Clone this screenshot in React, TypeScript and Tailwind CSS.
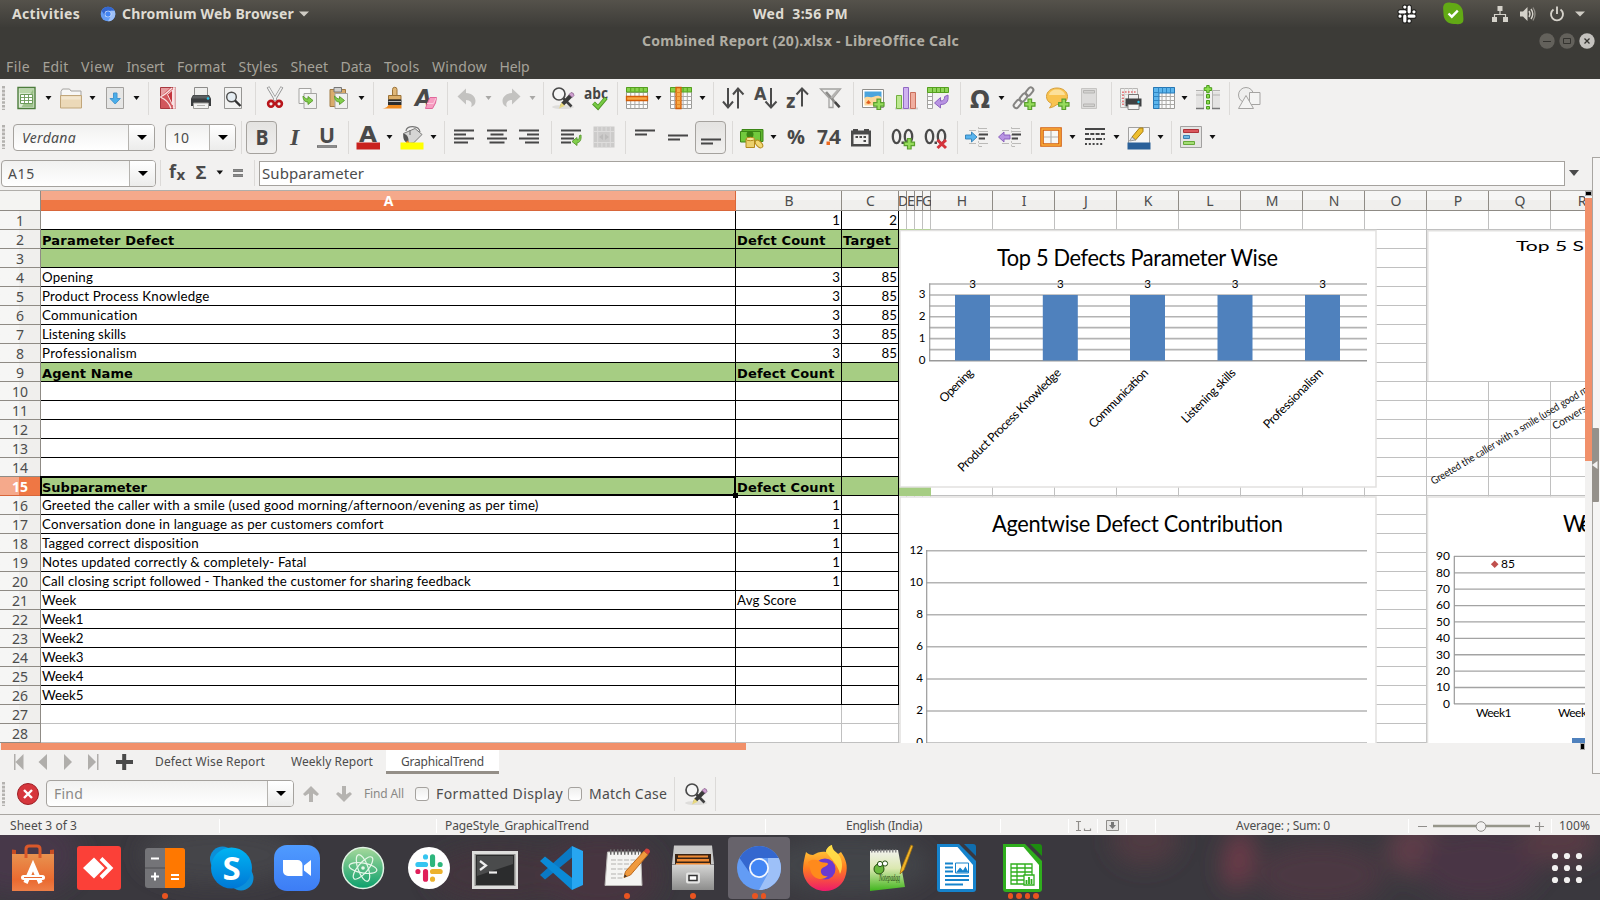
import { useLayoutEffect, useRef } from "react";
import type { ReactNode } from "react";

/* Text that tracks its letters so that it fills exactly w pixels. */
function Fit({ w, children, className = "" }: { w: number; children: string; className?: string }) {
  const ref = useRef<HTMLSpanElement>(null);
  useLayoutEffect(() => {
    const el = ref.current;
    if (!el) return;
    el.style.letterSpacing = "0px";
    const natural = el.getBoundingClientRect().width;
    el.style.letterSpacing = `${(w - natural) / children.length}px`;
  }, [w, children]);
  return (
    <span ref={ref} className={`inline-block whitespace-pre ${className}`}>
      {children}
    </span>
  );
}

function Ic({ children, w = 24, h = 24 }: { children: ReactNode; w?: number; h?: number }) {
  return (
    <svg width={w} height={h} viewBox={`0 0 ${w} ${h}`} className="block shrink-0 overflow-visible">
      {children}
    </svg>
  );
}

const Slot = ({ children }: { children: ReactNode }) => (
  <div className="flex h-full w-[32.5px] shrink-0 items-center justify-center">{children}</div>
);
const Caret = ({ off = false }: { off?: boolean }) => (
  <div className="flex h-full w-[11.5px] shrink-0 items-center justify-center pr-[2px]">
    <Ic w={7} h={4}>
      <path d="M0.5 0h6L3.5 4z" fill={off ? "#a9a8a6" : "#111"} />
    </Ic>
  </div>
);
const Grip = () => (
  <div className="flex w-[11px] shrink-0 items-center pl-[2px]">
    <Ic w={3} h={24}>
      <path d="M1.5 0v24" stroke="#b4b2af" strokeWidth="3" strokeDasharray="2.6 1.2" />
    </Ic>
  </div>
);
function Group({ w, children, first = false }: { w: string; children: ReactNode; first?: boolean }) {
  return (
    <div className={`flex h-[33px] shrink-0 items-center ${w} ${first ? "" : "border-l border-[#dcdad8] pl-[3px]"}`}>
      {children}
    </div>
  );
}

const Plus = ({ x = 12, y = 12 }: { x?: number; y?: number }) => (
  <path
    transform={`translate(${x} ${y})`}
    d="M4 .7h3.6v3.4H11v3.6H7.6V11H4V7.7H.7V4.1H4z"
    fill="#96dc5c"
    stroke="#5a9f2e"
    strokeWidth="1.2"
  />
);

/* ---------- standard toolbar icons ---------- */
const NewSheet = () => (
  <Ic>
    <path d="M3 1.5h17v21H3z" fill="#dcebd4" stroke="#4d7d3c" strokeWidth="1.4" />
    <path d="M4.5 3h14v4h-14z" fill="#b9d6a8" />
    <path d="M18.5 3v18H6.5z" fill="#8bb676" opacity=".75" />
    <path d="M5.5 8.5h12v9h-12z" fill="#fff" stroke="#6b9a58" />
    <path d="M5.5 11.500h12M5.5 14.500h12M9.500 8.500v9M13.500 8.500v9" stroke="#6b9a58" strokeWidth=".9" />
  </Ic>
);
const Folder = () => (
  <Ic>
    <path d="M2 12V5.5L3.500 3h7l1.500 2h10v7" fill="#f7f7f6" stroke="#a5a3a0" />
    <path d="M1.500 9.500h21v12.500h-21z" fill="#ecd9b8" stroke="#c1a67b" />
    <path d="M2.500 10.500h19v3h-19z" fill="#f3e6cf" />
  </Ic>
);
const Save = () => (
  <Ic>
    <path d="M3.5 1.5h17v21h-17z" fill="#e6e6e5" stroke="#a3a19e" />
    <path d="M10.5 7h3.5v5.5h3.3L12.2 18 7 12.5h3.5z" fill="#4aaeea" stroke="#4596cf" />
  </Ic>
);
const Pdf = () => (
  <Ic>
    <path d="M4.500 1.500h15v21h-15z" fill="#d2565c" stroke="#a8383f" />
    <path d="M5 2h9L5 10z" fill="#e79ea1" />
    <path d="M19 2v20h-1.500V2zM16 2C11 7 9 9 5 10.500v1c5 2 8 5 10 11" fill="none" stroke="#f8e3e4" strokeWidth="1.300" />
    <path d="M11.500 8.500L16.500 4v15z" fill="#c4353d" />
    <path d="M11.500 8.500L16.500 4v15z" fill="none" stroke="#f8e3e4" />
  </Ic>
);
const Printer = () => (
  <Ic>
    <path d="M5.5 1.5h13V10h-13z" fill="#eeeeed" stroke="#8d8c8a" />
    <path d="M4 9h16l2 3.500v7.500H2v-7.500z" fill="#3b3d3f" />
    <path d="M4.500 9.500h15l1.500 3H3z" fill="#5b5e60" />
    <path d="M4.5 17h15v5.5h-15z" fill="#f2f2f1" stroke="#9b9a97" />
    <path d="M8 19.5h8" stroke="#b5b4b1" />
    <circle cx="19" cy="12.500" r="1.300" fill="#25c7ee" />
  </Ic>
);
const Preview = () => (
  <Ic>
    <path d="M3.5 1.5h17v21h-17z" fill="#f2f2f1" stroke="#979694" />
    <circle cx="10.5" cy="11" r="4.8" fill="#e5edf2" stroke="#4b4b4b" strokeWidth="1.4" />
    <path d="M14 14.500l5.500 5.500" stroke="#303030" strokeWidth="2.4" />
  </Ic>
);
const Cut = () => (
  <Ic>
    <path d="M5 1l8 13.500M19 1l-8 13.500" stroke="#8c8c8c" strokeWidth="3" />
    <path d="M5.400 1.500l7.400 12.500M18.600 1.500l-7.400 12.500" stroke="#f2f2f2" strokeWidth="1.500" />
    <circle cx="8" cy="17.8" r="2.900" fill="none" stroke="#b8151b" strokeWidth="2.600" />
    <circle cx="16" cy="17.8" r="2.900" fill="none" stroke="#b8151b" strokeWidth="2.600" />
  </Ic>
);
const Arrow = ({ x = 0, y = 0 }: { x?: number; y?: number }) => (
  <path
    transform={`translate(${x} ${y})`}
    d="M0 1c0 4 2 6 5 6V9.5L10 5.5 5 1.5V4C3 4 2 3 0 1z"
    fill="#82cf4c"
    stroke="#58982c"
    strokeWidth=".9"
  />
);
const Copy = () => (
  <Ic>
    <path d="M3 2.5h12v15H3z" fill="#fafafa" stroke="#a5a4a2" />
    <path d="M8 7.5h12.5v15H8z" fill="#f1f1f0" stroke="#a5a4a2" />
    <Arrow x={7} y={9} />
  </Ic>
);
const Paste = () => (
  <Ic>
    <path d="M2 3.5h15.5v17H2z" fill="#d9ac6c" stroke="#a07a45" />
    <path d="M6 1.5h7.5v4.5H6z" fill="#cfcfce" stroke="#777" />
    <path d="M7 7.5h12.5v15H7z" fill="#f1f1f0" stroke="#a5a4a2" />
    <Arrow x={6.5} y={9} />
  </Ic>
);
const Brush = () => (
  <Ic>
    <path d="M11.500 10V3.500a2.200 2.200 0 0 1 4.500 0V10z" fill="#e0b778" stroke="#9c7337" />
    <path d="M7.500 9.500h12.500v4H7.500z" fill="#dcae68" stroke="#9c7337" />
    <path d="M7 13.500h13.500v5.500H7z" fill="#2d2d2d" />
    <path d="M7.500 15.500h12.500" stroke="#bbb" />
    <path d="M1.500 22.500c4-.5 5-2 6-3.500h13v3.500z" fill="#f08a1d" />
  </Ic>
);
const ClearFmt = () => (
  <Ic>
    <text x="1" y="19.5" fontSize="23" textLength="17" lengthAdjust="spacingAndGlyphs" fontStyle="italic" className="font-['DejaVu_Sans'] font-bold" fill="#494949">
      A
    </text>
    <path d="M13 18l3-6.500h6.500l-1 5.500-3 5.500h-7z" fill="#f79cc1" stroke="#e0689b" />
    <path d="M13 17.500h6.500l2.500-5.500" fill="none" stroke="#fbc9dd" />
  </Ic>
);
const Undo = ({ flip = false }: { flip?: boolean }) => (
  <Ic>
    <path
      transform={flip ? "translate(24 0) scale(-1 1)" : undefined}
      d="M2.5 10.5L11 2.5v4.500c6 0 9.500 4 9.500 8 0 3-1.500 5-4.500 6 2-4-.5-7-5-7v4.5z"
      fill="#c3c2c0"
    />
  </Ic>
);
const FindRep = () => (
  <Ic>
    <ellipse cx="12" cy="21" rx="11" ry="2" fill="#dedddb" />
    <circle cx="8" cy="8" r="6" fill="#f6f6f6" stroke="#4a4a4a" strokeWidth="1.7" />
    <path d="M12.5 12.5l8 8" stroke="#404040" strokeWidth="2.600" />
    <path d="M9 20.500l1.5-4L18.500 8l3 3-8.500 8.500z" fill="#3a3a3a" />
    <path d="M18 8.5L20 6.5q3 0 3 3l-1.8 1.9z" fill="#cf9fd0" stroke="#835b86" strokeWidth=".7" />
    <path d="M8 22.5l2.3-6 3.5 3.3z" fill="#e8d87e" />
  </Ic>
);
const Spell = () => (
  <Ic>
    <text x="0" y="13" fontSize="16" textLength="24" lengthAdjust="spacingAndGlyphs" className="font-['Open_Sans'] font-bold" fill="#454545">
      abc
    </text>
    <path d="M9.5 17l4.5 4.5 8-9.5" fill="none" stroke="#4c9224" strokeWidth="4" />
    <path d="M9.7 17.2l4.3 4 7.7-8.900" fill="none" stroke="#77cb44" strokeWidth="2.4" />
  </Ic>
);
const Rows = () => (
  <Ic>
    <path d="M1.5 1.5h21v21h-21z" fill="#fcfcfc" stroke="#9b9a97" />
    <path d="M1.5 6.5h21M1.5 14.5h21M1.5 18.5h21M5.7 1.5v21M9.9 1.5v21M14.1 1.5v21M18.3 1.5v21" stroke="#aaa9a6" />
    <path d="M1.5 1.5h21v4.5h-21z" fill="#86d24c" stroke="#55a01f" />
    <path d="M5.7 1.5v4M9.9 1.5v4M14.1 1.5v4M18.3 1.5v4" stroke="#55a01f" />
    <path d="M1.5 10.5h21v4h-21z" fill="#f8a944" stroke="#d35d08" strokeWidth="1.3" />
  </Ic>
);
const Cols = () => (
  <Ic>
    <path d="M1.5 1.5h21v21h-21z" fill="#fcfcfc" stroke="#9b9a97" />
    <path d="M1.5 10.5h21M1.5 14.5h21M1.5 18.5h21M5.7 1.5v21M14.1 1.5v21M18.3 1.5v21" stroke="#aaa9a6" />
    <path d="M1.5 1.5h21v4.5h-21z" fill="#86d24c" stroke="#55a01f" />
    <path d="M14.1 1.5v4M18.3 1.5v4" stroke="#55a01f" />
    <path d="M7 1.5h5v21H7z" fill="#f8a944" stroke="#d35d08" strokeWidth="1.3" />
    <path d="M7 6.5h5M7 10.5h5M7 14.5h5M7 18.5h5" stroke="#e58622" />
  </Ic>
);
const Sort = () => (
  <Ic>
    <path d="M7 2v19M2 15.5l5 6 5-6" fill="none" stroke="#4b4b4b" strokeWidth="2" />
    <path d="M17 22.5V3M12 8.5l5-6 5.5 6" fill="none" stroke="#4b4b4b" strokeWidth="2" />
  </Ic>
);
const SortA = () => (
  <Ic>
    <text x="0" y="14" fontSize="17" className="font-['DejaVu_Sans'] font-bold" fill="#4b4b4b" textLength="12.500" lengthAdjust="spacingAndGlyphs">
      A
    </text>
    <path d="M17 2v19M11.5 15.5l5.5 6 5.5-6" fill="none" stroke="#4b4b4b" strokeWidth="2" />
  </Ic>
);
const SortZ = () => (
  <Ic>
    <text x="0" y="22" fontSize="20" className="font-['DejaVu_Sans'] font-bold" fill="#4b4b4b" textLength="9.500" lengthAdjust="spacingAndGlyphs">
      z
    </text>
    <path d="M16 20.5V2.5M10.5 8.5l5.5-6 6 6" fill="none" stroke="#4b4b4b" strokeWidth="2" />
  </Ic>
);
const Filter = () => (
  <Ic>
    <path d="M1.5 3h20l-7.500 9v9.5h-4V12z" fill="#efefee" stroke="#a3a2a0" strokeWidth="1.3" />
    <path d="M7 6L20.500 21.500" stroke="#8b8a88" strokeWidth="2.600" />
    <path d="M16 16l4.500 5" stroke="#444" strokeWidth="2.400" />
    <path d="M12 12l8-9" stroke="#b4b3b1" strokeWidth="2" />
  </Ic>
);
const Picture = () => (
  <Ic>
    <path d="M1.5 3.5h21v18h-21z" fill="#fff" stroke="#8f8e8b" />
    <path d="M3.5 5.500h17v7h-17z" fill="#4ba4dd" />
    <path d="M3.5 12c3-2.500 5 0 8-1s5-2.500 9 0v8.500h-17z" fill="#fcd79a" />
    <path d="M5 17l2.500-3 2.500 3-2.500 1z" fill="#e45d1e" />
    <Plus x={12} y={12.5} />
  </Ic>
);
const Chart = () => (
  <Ic>
    <path d="M1 22.5h23" stroke="#cfcdcb" strokeWidth="2" />
    <path d="M2.5 9.5h5v13h-5z" fill="#bde890" stroke="#72b13f" />
    <path d="M9.500 1.5H14.500v21H9.500z" fill="#cfb2f0" stroke="#9168c4" />
    <path d="M16.500 6.5h5v16h-5z" fill="#f0ae9f" stroke="#c9705d" />
  </Ic>
);
const Pivot = () => (
  <Ic>
    <path d="M1.5 1.5h5v21h-5z" fill="#fbfbfb" stroke="#a3a29f" />
    <path d="M1.5 10.5h5M1.5 14.5h5M1.5 18.5h5" stroke="#a3a29f" />
    <path d="M1.5 1.5h21v5h-21z" fill="#8fd458" stroke="#55a01f" />
    <path d="M6.5 1.5v5M10.5 1.5v5M14.5 1.5v5M18.5 1.5v5" stroke="#55a01f" />
    <path d="M8.5 17l6-5.500v3.500c3 0 4-1.500 4.200-4.500l3.300-1.500c.8 7-2 9.500-7.500 9.500v3.500z" fill="#b894e2" stroke="#8559ba" strokeWidth=".9" />
  </Ic>
);
const Omega = () => (
  <Ic>
    <text x="2" y="21.5" fontSize="25" className="font-['DejaVu_Sans'] font-bold" fill="#4a4a4a" textLength="20" lengthAdjust="spacingAndGlyphs">
      Ω
    </text>
  </Ic>
);
const Link = () => (
  <Ic>
    <g fill="none" stroke="#868583" strokeWidth="2">
      <rect x="-4.5" y="-2.6" width="9" height="5.2" rx="2.6" transform="translate(17.5 5.500) rotate(-50)" />
      <rect x="-4.5" y="-2.6" width="9" height="5.2" rx="2.6" transform="translate(11.500 11.5) rotate(-50)" />
      <rect x="-4.5" y="-2.6" width="9" height="5.2" rx="2.6" transform="translate(5.5 18) rotate(-50)" />
    </g>
    <Plus x={12} y={12.5} />
  </Ic>
);
const Comment = () => (
  <Ic>
    <path d="M12 2c6 0 10.5 3.6 10.5 8.5S18 18.500 12 18.500q-3 2.500-7.500 3.500 2-2.500 2-4.500C3 16 1.5 13.5 1.5 10.5 1.5 5.6 6 2 12 2z" fill="#f9c350" stroke="#d6a03c" />
    <path d="M4 9c.8-3.500 4-5.400 8-5.400s7.200 2 8 5.400z" fill="#fce09a" />
    <Plus x={13} y={12.5} />
  </Ic>
);
const Header = () => (
  <Ic>
    <path d="M4.5 2.500h15v20h-15z" fill="#dddcdb" stroke="#c6c5c3" />
    <path d="M6.5 4.500h11v2.500h-11zM6.500 18h11v2.500h-11z" fill="#d2d1cf" stroke="#b6b5b3" />
  </Ic>
);
const PrintArea = () => (
  <Ic>
    <path d="M1.5 2.500h17v19h-17z" fill="#f1f1f0" stroke="#b8b7b5" />
    <path d="M5.5 2.500v18M9.5 2.500v18M13.5 2.500v18M1.5 8.5h17M1.5 12.5h17M1.500 16.500h17" stroke="#d6d5d3" />
    <path d="M4 19V6h13" fill="none" stroke="#e2353b" strokeWidth="1.2" strokeDasharray="1.6 1.4" />
    <path d="M9.5 8.5h10v5h-10z" fill="#eee" stroke="#777" />
    <path d="M6.5 12.500h16v8h-16z" fill="#3e4042" />
    <path d="M9 18.5h11v5H9z" fill="#f4f4f4" stroke="#888" />
    <circle cx="19.5" cy="16" r="1.2" fill="#25c7ee" />
  </Ic>
);
const Freeze = () => (
  <Ic>
    <path d="M1.5 1.5h21v21h-21z" fill="#fcfcfc" stroke="#9b9a97" />
    <path d="M1.5 10.5h21M1.5 14.5h21M1.5 18.5h21M10 1.5v21M14.1 1.5v21M18.3 1.5v21" stroke="#aaa9a6" />
    <path d="M1.5 1.5h21V7H7v15.500H1.5z" fill="#5cb5ec" stroke="#2677b5" />
    <path d="M1.5 6.5H7M6.500 1.5V7M10.500 1.5V7M14.5 1.5V7M18.5 1.5V7M1.5 10.5H7M1.5 14.5H7M1.5 18.5H7" stroke="#2f86c4" />
  </Ic>
);
const Split = () => (
  <Ic>
    <path d="M0 5.500h8v16.500H0zM16 5.500h8v16.500h-8z" fill="#e4e3e2" />
    <path d="M0 4.500h7.5V22M24 4.500h-7.5V22M0 9h7M17 9h7" fill="none" stroke="#b2b1af" />
    <path d="M0 22.5h8M16 22.5h8" stroke="#777" strokeWidth="1.4" />
    <path d="M10.5 8.500h3v3.500h-3zM10.5 14.500h3v3.500h-3zM10.5 20.500h3v2.500h-3z" fill="#8be04e" stroke="#4a9b1c" />
    <path d="M10.700-.5h2.500v2.200h2.500v2.800h-2.500v2.200h-2.500V4.500H8.200V1.700h2.500z" fill="#8be04e" stroke="#4a9b1c" />
  </Ic>
);
const Shapes = () => (
  <Ic>
    <circle cx="9" cy="9" r="7.5" fill="#efefee" stroke="#a5a4a2" />
    <path d="M12.5 6.500h10.5v12H12.5z" fill="#f4f4f3" stroke="#a5a4a2" />
    <path d="M9 9.5l7.500 13h-15z" fill="#f4f4f3" stroke="#a5a4a2" />
  </Ic>
);

/* ---------- formatting toolbar icons ---------- */
const Lines = ({ d }: { d: string }) => (
  <Ic>
    <path d={d} stroke="#474747" strokeWidth="2" />
  </Ic>
);
const Wrap = () => (
  <Ic>
    <path d="M2 5.5h20M2 9.5h13M2 13.5h13M2 17.5h10" stroke="#474747" strokeWidth="2" />
    <path d="M22 10c.5 5-1 7.500-4 7.800V20.500L13 16.500l5-4V15c2-.3 2.500-2 2.500-4.500z" fill="#82cf4c" stroke="#58982c" strokeWidth=".9" />
  </Ic>
);
const Merge = () => (
  <Ic>
    <path d="M1.5 1.5h21v21h-21z" fill="#cccbca" />
    <path d="M1.5 6.5h21M1.5 17.5h21M5.7 1.5v5M9.9 1.5v5M14.1 1.5v5M18.3 1.5v5M5.7 6.5v16M18.3 6.5v16M9.900 17v5.500M14.100 17v5.500" stroke="#dedddc" />
    <path d="M11 9v6L7 12zM13 9v6l4-3z" fill="#bdbcbb" />
  </Ic>
);
const Money = () => (
  <Ic>
    <path d="M2 4.500h21v12H2z" fill="#5fb52f" stroke="#3c8616" />
    <path d="M.5 6.500h20v10.500H.5z" fill="#72ca3d" stroke="#3c8616" />
    <circle cx="10" cy="9.500" r="3.500" fill="#3a8514" />
    <path d="M6 14h8.500v8.500H6z" fill="#ecd06c" stroke="#b4891c" />
    <ellipse cx="10.300" cy="14" rx="4.300" ry="1.700" fill="#f9e79c" stroke="#b4891c" />
    <ellipse cx="19" cy="19" rx="2.600" ry="4.600" transform="rotate(-45 19 19)" fill="#f2d873" stroke="#b4891c" />
  </Ic>
);
const TextIc = ({ t, size, len, y = 20 }: { t: string; size: number; len: number; y?: number }) => (
  <Ic>
    <text x={(24 - len) / 2} y={y} fontSize={size} textLength={len} lengthAdjust="spacingAndGlyphs" className="font-['Open_Sans'] font-bold" fill="#484848">
      {t}
    </text>
  </Ic>
);
const Number74 = () => (
  <Ic>
    <g className="font-['Open_Sans'] font-bold" fontSize="20" fill="#484848">
      <text x="0" y="19" textLength="11" lengthAdjust="spacingAndGlyphs">7</text>
      <text x="12" y="19" textLength="12" lengthAdjust="spacingAndGlyphs">4</text>
    </g>
    <path d="M9.500 16.500h3.500v3.500H9.500z" fill="#ee6a1e" />
  </Ic>
);
const DateIc = () => (
  <Ic>
    <path d="M2 5.500h2V4h5v1.500h6V4h5v1.500h2V21.500H2z" fill="#4a4a4a" />
    <path d="M4.500 9.500h15v9.500h-15z" fill="#f2f1f0" />
    <path d="M10.5 12h2.500M14.5 12H17M6.5 12h2.500M14.5 16H17" stroke="#4a4a4a" strokeWidth="2" />
  </Ic>
);
const Decimal = ({ del = false }: { del?: boolean }) => (
  <Ic>
    <g fill="none" stroke="#4a4a4a" strokeWidth="2.300">
      <ellipse cx="5.500" cy="11.500" rx="3.700" ry="6.700" />
      <ellipse cx="17.500" cy="11.500" rx="3.700" ry="6.700" />
    </g>
    <path d="M10.500 16.500h2.500v2.500h-2.500z" fill="#4a4a4a" />
    {del ? (
      <path d="M13.5 15l8.500 8M22 15l-8.500 8" stroke="#d4333b" strokeWidth="3" />
    ) : (
      <Plus x={12.5} y={13} />
    )}
  </Ic>
);
const Indent = ({ out = false }: { out?: boolean }) => (
  <Ic>
    <path d="M4 5.500h7M4 18.500h7M14 3.500h8M14 6.500h9M14 18.500h9M14 21.500h3" stroke="#bbbab8" />
    <path d="M13.500 2v21" stroke="#c4c3c1" strokeDasharray="2 1.5" />
    <path d="M14 9.500h9M14 13.500h6" stroke="#474747" strokeWidth="2" />
    {out ? (
      <path d="M.5 12l5.500-5v3h6v4H6v3z" fill="#b894e2" stroke="#8559ba" strokeWidth=".9" />
    ) : (
      <path d="M12 12L6.500 7v3h-6v4h6v3z" fill="#58b4ee" stroke="#2f7fb5" strokeWidth=".9" />
    )}
  </Ic>
);
const Borders = () => (
  <Ic>
    <path d="M3 4h18v16H3z" fill="#f7f7f6" stroke="#d35d08" strokeWidth="3.6" />
    <path d="M3 4h18v16H3z" fill="none" stroke="#fbb03f" strokeWidth="1.4" />
    <path d="M12 6v12M5 12h14" stroke="#b3b2b0" strokeWidth="1.2" />
  </Ic>
);
const LineStyle = () => (
  <Ic>
    <path d="M2 4h20" stroke="#474747" strokeWidth="2" />
    <path d="M2 9h20" stroke="#474747" strokeWidth="2" strokeDasharray="4 1.3" />
    <path d="M2 14h20" stroke="#474747" strokeWidth="2" strokeDasharray="6 1.5 2 1.5" />
    <path d="M2 19h19" stroke="#474747" strokeWidth="2" strokeDasharray="2 1.8" />
  </Ic>
);
const BorderColor = () => (
  <Ic>
    <path d="M1.5 2.5h21v17h-21z" fill="#f6f6f6" stroke="#a2a1a0" />
    <path d="M5 12L12.500 3h3.500v3.500L8.500 15z" fill="#eebf2f" stroke="#a77c11" />
    <path d="M2.500 16L5 12l3.500 3z" fill="#ddd" stroke="#888" strokeWidth=".8" />
    <path d="M.5 17.5h23v7H.5z" fill="#2a6099" />
  </Ic>
);
const Cond = () => (
  <Ic>
    <path d="M1.5 1.5h21v21h-21z" fill="#e5e4e3" stroke="#a2a1a0" />
    <path d="M4.5 4.5h15v3h-15z" fill="#d9565b" stroke="#ad3138" />
    <path d="M4.5 10.5h6v3h-6z" fill="#6db8e4" stroke="#3a80b2" />
    <path d="M4.5 16.5h11v3h-11z" fill="#a3dd74" stroke="#66a838" />
  </Ic>
);
const FontColor = () => (
  <Ic>
    <text x="3" y="17" fontSize="22" textLength="18" lengthAdjust="spacingAndGlyphs" className="font-['DejaVu_Sans'] font-bold" fill="#494949">
      A
    </text>
    <path d="M.5 17.500h23.500v7H.5z" fill="#c9211e" />
  </Ic>
);
const Fill = () => (
  <Ic>
    <path d="M3.500 8.500L15 3.500l7 6-8.500 8.500-6 .5z" fill="#d5d5d4" stroke="#7a7a79" />
    <path d="M3.500 8.500c4 1 6 5 4.500 10C4 17 2.500 12.500 3.500 8.500z" fill="#555" />
    <path d="M6 6C6 0 19 0 20 7M10 5v5" fill="none" stroke="#777" strokeWidth="1.200" />
    <path d="M6 18q1-5 3.5 0z" fill="#f28a1f" />
    <path d="M.5 17.500h23v7H.5z" fill="#ffff00" />
  </Ic>
);

function Combo({ box, value, children }: { box: string; value: string; children: ReactNode }) {
  return (
    <div className={`flex h-[27px] shrink-0 overflow-hidden rounded-[4px] border border-[#a5a29e] bg-linear-to-b from-[#f1f1f0] to-white ${box}`}>
      <div className={`flex items-center ${value}`}>{children}</div>
      <div className="flex flex-1 items-center justify-center border-l border-[#b5b3af] bg-linear-to-b from-white to-[#ececeb]">
        <Ic w={10} h={5}>
          <path d="M0 0h10L5 5z" fill="#000" />
        </Ic>
      </div>
    </div>
  );
}
const Pressed = ({ children }: { children: ReactNode }) => (
  <div className="ml-px flex h-[33px] w-[31px] shrink-0 items-center justify-center rounded-[4px] border border-[#a5a29e] bg-linear-to-b from-[#e4e3e1] to-[#f1f0ef]">
    {children}
  </div>
);

/* ---------- window chrome ---------- */
const SlackMark = ({ c }: { c: string[] }) => (
  <g strokeWidth="4.4" strokeLinecap="round">
    <path d="M9 2.5v0M2.5 9h6.5" stroke={c[0]} />
    <path d="M15 2.5v6.5M21.5 9v0" stroke={c[1]} />
    <path d="M15 15h6.5M15 21.5v0" stroke={c[2]} />
    <path d="M9 15v6.5M2.5 15v0" stroke={c[3]} />
  </g>
);
const ChromiumMark = () => (
  <>
    <circle cx="24" cy="24" r="22" fill="#639cf5" />
    <path d="M4.5 14A22 22 0 0 1 43.6 14H24L14.5 28.500z" fill="#3467cf" />
    <path d="M43.6 14A22 22 0 0 1 24 46l9-16.500L33 14z" fill="#9dc0f8" />
    <circle cx="24" cy="24" r="10" fill="#f2f6fd" />
    <circle cx="24" cy="24" r="8.2" fill="#4285f4" />
  </>
);

function TopPanel() {
  return (
    <div className="flex h-[27px] items-center bg-linear-to-b from-[#55524b] to-[#3d3c38] text-[14px] font-bold text-[#dfdbd2]">
      <div className="flex w-[740px] items-center pl-[12px]">
        <Fit w={68}>Activities</Fit>
        <svg width="16" height="16" viewBox="0 0 48 48" className="mr-[6px] ml-[20px]">
          <ChromiumMark />
        </svg>
        <Fit w={172}>Chromium Web Browser</Fit>
        <svg width="10" height="6" className="ml-[5px]">
          <path d="M0 .5h10L5 5.5z" fill="#cfccc4" />
        </svg>
      </div>
      <div className="w-[660px] pl-[13px]">
        <Fit w={95}>Wed  3:56 PM</Fit>
      </div>
      <div className="flex w-[200px] items-center">
        <svg width="22" height="22" viewBox="-3 -3 30 30" className="-ml-[4px]">
          <g stroke="#1c1c1a" strokeWidth="7" strokeLinecap="round">
            <path d="M2.5 9H9M15 2.5V9M15 15h6.500M9 15v6.500M9 2.500v0M21.500 9v0M15 21.500v0M2.500 15v0" />
          </g>
          <SlackMark c={["#fff", "#fff", "#fff", "#fff"]} />
        </svg>
        <svg width="22" height="23" viewBox="0 0 22 23" className="ml-[24px]">
          <path d="M3 1.5C6-.5 9 1 11 1c6 0 10 4.500 10 10 0 3 1 6 0 9-2 3-6 2-9 2-6 0-10.500-4-10.500-10C1.500 8 0 4 3 1.500z" fill="#62a915" />
          <path d="M6.5 11.5l3.300 3.200 6-6" fill="none" stroke="#fff" strokeWidth="2.4" />
        </svg>
        <svg width="16" height="16" className="ml-[28px]">
          <path d="M5.5 0h5v5h-5zM0 11h5v5H0zM11 11h5v5h-5z" fill="#d5d2ca" />
          <path d="M8 5v3.5M2.5 11V8.5h11V11" fill="none" stroke="#d5d2ca" strokeWidth="1.2" />
        </svg>
        <svg width="16" height="16" className="ml-[12px]">
          <path d="M0 5.500h3L7.500 1v14L3 10.500H0z" fill="#d5d2ca" />
          <path d="M9 5q2 3 0 6M11 3q3.500 5 0 10" fill="none" stroke="#d5d2ca" strokeWidth="1.4" />
          <path d="M13 1.500q4 6.500 0 13" fill="none" stroke="#908d86" strokeWidth="1.3" />
        </svg>
        <svg width="16" height="16" className="ml-[13px]">
          <path d="M4.5 3.500a6 6 0 1 0 7 0M8 .5V8" fill="none" stroke="#d5d2ca" strokeWidth="1.9" />
        </svg>
        <svg width="10" height="6" className="ml-[10px]">
          <path d="M0 .5h10L5 5.5z" fill="#cfccc4" />
        </svg>
      </div>
    </div>
  );
}

const MENUS: [string, number][] = [
  ["File", 24], ["Edit", 26], ["View", 33], ["Insert", 38], ["Format", 49], ["Styles", 39.5],
  ["Sheet", 37.5], ["Data", 31], ["Tools", 35.5], ["Window", 55], ["Help", 30],
];

function TitleAndMenu() {
  return (
    <div className="bg-[#3c3b37]">
      <div className="flex h-[27px] items-center text-[14px] font-bold text-[#b0ada3]">
        <div className="w-[1539px] pl-[642px]">
          <Fit w={317}>Combined Report (20).xlsx - LibreOffice Calc</Fit>
        </div>
        <div className="flex gap-[4px]">
          <Ic w={16} h={16}>
            <circle cx="8" cy="8" r="7.7" fill="#63615b" />
            <path d="M4 8.5h8" stroke="#34332f" />
          </Ic>
          <Ic w={16} h={16}>
            <circle cx="8" cy="8" r="7.7" fill="#63615b" />
            <path d="M4.5 5.5h7v5h-7z" fill="none" stroke="#34332f" />
          </Ic>
          <Ic w={16} h={16}>
            <circle cx="8" cy="8" r="7.7" fill="#c4c2be" />
            <path d="M5.5 5.5l5 5M10.5 5.5l-5 5" stroke="#34332f" strokeWidth="1.3" />
          </Ic>
        </div>
      </div>
      <div className="flex h-[25px] items-center gap-[12.5px] pl-[6px] text-[14px] text-[#a5a299]">
        {MENUS.map(([t, w]) => (
          <Fit key={t} w={w}>
            {t}
          </Fit>
        ))}
      </div>
    </div>
  );
}

function StandardBar() {
  return (
    <div className="flex h-[38px] items-center">
      <Grip />
      <Group w="w-[137px]" first>
        <Slot><NewSheet /></Slot><Caret /><Slot><Folder /></Slot><Caret /><Slot><Save /></Slot><Caret />
      </Group>
      <Group w="w-[107px]"><Slot><Pdf /></Slot><Slot><Printer /></Slot><Slot><Preview /></Slot></Group>
      <Group w="w-[118px]"><Slot><Cut /></Slot><Slot><Copy /></Slot><Slot><Paste /></Slot><Caret /></Group>
      <Group w="w-[74px]"><Slot><Brush /></Slot><Slot><ClearFmt /></Slot></Group>
      <Group w="w-[96px]"><Slot><Undo /></Slot><Caret off /><Slot><Undo flip /></Slot><Caret off /></Group>
      <Group w="w-[74px]"><Slot><FindRep /></Slot><Slot><Spell /></Slot></Group>
      <Group w="w-[96px]"><Slot><Rows /></Slot><Caret /><Slot><Cols /></Slot><Caret /></Group>
      <Group w="w-[140px]"><Slot><Sort /></Slot><Slot><SortA /></Slot><Slot><SortZ /></Slot><Slot><Filter /></Slot></Group>
      <Group w="w-[107px]"><Slot><Picture /></Slot><Slot><Chart /></Slot><Slot><Pivot /></Slot></Group>
      <Group w="w-[151px]"><Slot><Omega /></Slot><Caret /><Slot><Link /></Slot><Slot><Comment /></Slot><Slot><Header /></Slot></Group>
      <Group w="w-[118px]"><Slot><PrintArea /></Slot><Slot><Freeze /></Slot><Caret /><Slot><Split /></Slot></Group>
      <Group w="w-[60px]"><Slot><Shapes /></Slot></Group>
    </div>
  );
}

function FormatBar() {
  return (
    <div className="flex h-[40px] items-center text-[#4c4c4c]">
      <Grip />
      <Group w="w-[230px]" first>
        <Combo box="ml-[2px] w-[142px]" value="w-[114px] pl-[8px] text-[14px] italic">
          <Fit w={54}>Verdana</Fit>
        </Combo>
        <Combo box="ml-[10px] w-[71px]" value="w-[43px] pl-[7px] text-[14px]">
          <Fit w={16}>10</Fit>
        </Combo>
      </Group>
      <Group w="w-[107px]">
        <Slot>
          <Pressed><TextIc t="B" size={22} len={13} /></Pressed>
        </Slot>
        <Slot>
          <Ic>
            <text x="8" y="20" fontSize="24" className="font-['Liberation_Serif'] font-bold italic" fill="#4a4a4a">I</text>
          </Ic>
        </Slot>
        <Slot>
          <Ic>
            <text x="5" y="17.5" fontSize="21" textLength="16" lengthAdjust="spacingAndGlyphs" className="font-['Open_Sans'] font-bold" fill="#4a4a4a">U</text>
            <path d="M3 21.5h20" stroke="#5a5a5a" strokeWidth="2.4" />
            <path d="M3.500 21.500h19" stroke="#9a9a9a" strokeWidth=".8" />
          </Ic>
        </Slot>
      </Group>
      <Group w="w-[96px]"><Slot><FontColor /></Slot><Caret /><Slot><Fill /></Slot><Caret /></Group>
      <Group w="w-[107px]">
        <Slot><Lines d="M2 5.5h20M2 9.5h12M2 13.5h20M2 17.5h14" /></Slot>
        <Slot><Lines d="M2 5.5h20M5.5 9.5h13M2 13.5h20M4.5 17.5h15" /></Slot>
        <Slot><Lines d="M2 5.5h20M10 9.5h12M2 13.5h20M8 17.5h14" /></Slot>
      </Group>
      <Group w="w-[74px]"><Slot><Wrap /></Slot><Slot><Merge /></Slot></Group>
      <Group w="w-[107px]">
        <Slot><Lines d="M2 5.5h20M2 9.5h12" /></Slot>
        <Slot><Lines d="M2 10.5h20M2 14.5h12" /></Slot>
        <Slot><Pressed><Lines d="M2 14.5h20M2 18.5h12" /></Pressed></Slot>
      </Group>
      <Group w="w-[151px]">
        <Slot><Money /></Slot><Caret /><Slot><TextIc t="%" size={20} len={18} y={19} /></Slot>
        <Slot><Number74 /></Slot><Slot><DateIc /></Slot>
      </Group>
      <Group w="w-[74px]"><Slot><Decimal /></Slot><Slot><Decimal del /></Slot></Group>
      <Group w="w-[74px]"><Slot><Indent /></Slot><Slot><Indent out /></Slot></Group>
      <Group w="w-[140px]">
        <Slot><Borders /></Slot><Caret /><Slot><LineStyle /></Slot><Caret /><Slot><BorderColor /></Slot><Caret />
      </Group>
      <Group w="w-[60px]"><Slot><Cond /></Slot><Caret /></Group>
    </div>
  );
}

function FormulaBar() {
  return (
    <div className="flex h-[33px] items-start pt-[3px] text-[#4c4c4c]">
      <Combo box="ml-[1px] w-[155px]" value="w-[127px] pl-[6px] text-[14px]">
        <Fit w={27}>A15</Fit>
      </Combo>
      <div className="ml-[4px] flex h-[26px] w-[94px] items-center border-l border-[#dcdad8]">
        <Ic w={94} h={26}>
          <text x="8" y="18" fontSize="18" className="font-['Open_Sans'] font-bold" fill="#4a4a4a">f</text>
          <text x="15.500" y="20" fontSize="15" className="font-['Open_Sans'] font-bold" fill="#4a4a4a">x</text>
          <text x="34.500" y="19" fontSize="18" textLength="11" lengthAdjust="spacingAndGlyphs" className="font-['Open_Sans'] font-bold" fill="#4a4a4a">Σ</text>
          <path d="M55.500 10.500h6.500l-3.200 4z" fill="#111" />
          <path d="M72 10.5h10M72 15.5h10" stroke="#555" strokeWidth="2.6" />
          <path d="M72 10.5h10M72 15.5h10" stroke="#999" strokeWidth=".8" />
        </Ic>
      </div>
      <div className="h-[26px] w-[4px] border-l border-[#dcdad8]" />
      <div className="mt-[1px] ml-[1px] flex h-[25px] w-[1306px] items-center border border-[#a5a29e] bg-white pb-[1px] pl-[2px] text-[15px]">
        <Fit w={102}>Subparameter</Fit>
      </div>
      <div className="mt-[10px] ml-[4px]">
        <Ic w={10} h={6}>
          <path d="M0 0h10L5 6z" fill="#4a4a4a" />
        </Ic>
      </div>
    </div>
  );
}

/* ---------- spreadsheet ---------- */
const GRID = "grid grid-cols-[695px_106px_57px_repeat(4,8px)_repeat(11,62px)]";
const GREEN_ROWS = [2, 3, 9, 15];
const A: Record<number, [string, number]> = {
  2: ["Parameter Defect", 132.5], 4: ["Opening", 51], 5: ["Product Process Knowledge", 167.5], 6: ["Communication", 96],
  7: ["Listening skills", 84], 8: ["Professionalism", 95], 9: ["Agent Name", 91], 15: ["Subparameter", 105],
  16: ["Greeted the caller with a smile (used good morning/afternoon/evening as per time)", 496.5],
  17: ["Conversation done in language as per customers comfort", 342], 18: ["Tagged correct disposition", 157],
  19: ["Notes updated correctly & completely- Fatal", 264.5],
  20: ["Call closing script followed - Thanked the customer for sharing feedback", 429],
  21: ["Week", 34.5], 22: ["Week1", 41.5], 23: ["Week2", 41.5], 24: ["Week3", 41.5], 25: ["Week4", 41.5], 26: ["Week5", 41.5],
};
const BL: Record<number, [string, number]> = {
  2: ["Defct Count", 88.5], 9: ["Defect Count", 97.5], 15: ["Defect Count", 97.5], 21: ["Avg Score", 59.5],
};
const BR: Record<number, string> = { 1: "1", 4: "3", 5: "3", 6: "3", 7: "3", 8: "3", 16: "1", 17: "1", 18: "1", 19: "1", 20: "1" };
const CR: Record<number, string> = { 1: "2", 4: "85", 5: "85", 6: "85", 7: "85", 8: "85" };
const ROWS = Array.from({ length: 28 }, (_, i) => i + 1);
const LETTERS = ["H", "I", "J", "K", "L", "M", "N", "O", "P", "Q", "R"];

function Row({ r }: { r: number }) {
  const bold = GREEN_ROWS.includes(r);
  const bordered = r <= 26;
  const line = bordered ? "border-black" : "border-[#c0c0c0]";
  const bg = bold ? "bg-[#a6cd83]" : "bg-white";
  const font = bold
    ? "font-['DejaVu_Sans'] text-[13px] font-bold leading-[21px]"
    : "font-['Lato'] text-[13.3px] leading-[18px]";
  const cell = `h-[19px] overflow-hidden border-r border-b px-[1px] text-black ${line} ${bg} ${font}`;
  const small = r === 2 || r === 15 ? "bg-[#a6cd83]" : r === 1 ? "border-r border-b border-r-[#c0c0c0] border-b-[#a6cd83]" : "border-r border-b border-[#c0c0c0]";
  return (
    <div className="flex">
      <div
        className={
          r === 15
            ? "h-[19px] w-[41px] border-r border-b border-r-[#8f8b85] border-b-[#d8663a] bg-linear-to-r from-[#f5a98b] from-48% to-[#ef7744] to-48% text-center text-[14px] leading-[19px] font-bold text-white"
            : "h-[19px] w-[41px] border-r border-b border-[#8f8b85] bg-linear-to-r from-[#f6f6f5] from-48% to-[#f0efed] to-48% text-center text-[14px] leading-[19px] text-[#4c4c4c]"
        }
      >
        {r}
      </div>
      <div className={GRID}>
        <div className={cell}>{A[r] ? <Fit w={A[r][1]}>{A[r][0]}</Fit> : null}</div>
        <div className={`${cell} ${BR[r] ? "text-right" : ""}`}>{BL[r] ? <Fit w={BL[r][1]}>{BL[r][0]}</Fit> : BR[r]}</div>
        <div className={`${cell} text-right`}>{r === 2 ? <Fit w={48} className="float-left">Target</Fit> : CR[r]}</div>
        {[0, 1, 2, 3].map((i) => (
          <div key={i} className={`h-[19px] ${small}`} />
        ))}
        {LETTERS.map((l) => (
          <div key={l} className="h-[19px] border-r border-b border-[#c0c0c0] bg-white" />
        ))}
      </div>
    </div>
  );
}

const lato = "font-['Lato']";
const BARS = [972.5, 1060.3, 1147.5, 1235, 1322.5];
const CATS: [string, number][] = [["Opening", 42], ["Product Process Knowledge", 140], ["Communication", 78], ["Listening skills", 71], ["Professionalism", 79]];

/* Chart drawings use window coordinates; the viewBox starts at the column header's top. */
function Charts() {
  return (
    <svg width="1585" height="552" viewBox="0 191 1585 552" className="pointer-events-none absolute top-0 left-0">
      <g fill="#fff" stroke="#e2e1e0" strokeWidth="1.5">
        <path d="M900 230.5h476v256.5H900z" />
        <path d="M900 497h476v300H900z" />
        <path d="M1427.5 230.5h300V381h-300z" stroke="none" />
        <path d="M1427.8 381V230.7h200" fill="none" />
        <path d="M1427.5 497h300v300h-300z" />
      </g>
      <path d="M1427 381.5h158" stroke="#c0c0c0" />

      <text transform="translate(997 265.500) scale(1 1.060)" fontSize="21.8" textLength="281" className={lato}>Top 5 Defects Parameter Wise</text>
      {[284, 295, 306, 316.7, 327.6, 338.6, 349.6].map((y) => (
        <path key={y} d={`M929 ${y}h438`} stroke="#b3b3b3" strokeWidth="1.6" />
      ))}
      <path d="M929.7 283.5V361" stroke="#999" strokeWidth="1.2" />
      <path d="M929 360.7h438" stroke="#999" strokeWidth="1.6" />
      {["0", "1", "2", "3"].map((n, i) => (
        <text key={n} x="925.5" y={364 - i * 22} fontSize="11.6" textAnchor="end" className={lato}>{n}</text>
      ))}
      {BARS.map((x, i) => (
        <g key={x}>
          <path d={`M${x - 17.5} 295h35v65.5h-35z`} fill="#4f81bd" />
          <text x={x} y="288" fontSize="11.6" textAnchor="middle" className={lato}>3</text>
          <text
            transform={`translate(${x + 1.5} 373.5) rotate(-45)`}
            x={-CATS[i][1]}
            y="0"
            fontSize="12.2"
            textLength={CATS[i][1]}
            className={lato}
          >
            {CATS[i][0]}
          </text>
        </g>
      ))}

      <text transform="translate(992 532) scale(1 1.060)" fontSize="21.8" textLength="291" className={lato}>Agentwise Defect Contribution</text>
      {[12, 10, 8, 6, 4, 2, 0].map((n, i) => (
        <g key={n}>
          <path d={`M926 ${550.7 + i * 32.05}h441`} stroke="#b3b3b3" strokeWidth="1.5" />
          <text x="923" y={554 + i * 32.05} fontSize="11.6" textAnchor="end" className={lato}>{n}</text>
        </g>
      ))}
      <path d="M926.7 550v200" stroke="#999" strokeWidth="1.2" />

      <text x="1516" y="251.4" fontSize="12.8" textLength="68" lengthAdjust="spacingAndGlyphs" className={lato}>Top 5 S</text>
      <g className={lato} fontSize="10.5" fill="#111">
        <text transform="translate(1433.5 485) rotate(-31)" textLength="181" lengthAdjust="spacingAndGlyphs">
          Greeted the caller with a smile (used good m
        </text>
        <text transform="translate(1555 430) rotate(-31)" textLength="43" lengthAdjust="spacingAndGlyphs">Conversa</text>
      </g>

      <text transform="translate(1563 532) scale(1 1.060)" fontSize="21.8" textLength="29" className={lato}>We</text>
      {[90, 80, 70, 60, 50, 40, 30, 20, 10, 0].map((n, i) => (
        <g key={n}>
          <path d={`M1454 ${556.4 + i * 16.39}h140`} stroke={n ? "#a3a3a3" : "#999"} strokeWidth="1.3" />
          <text x="1450" y={560.3 + i * 16.39} fontSize="12" textAnchor="end" className={lato}>{n}</text>
        </g>
      ))}
      <path d="M1454.3 556v148" stroke="#999" strokeWidth="1.2" />
      <path d="M1494.7 560.500l3.800 3.800-3.800 3.800-3.800-3.800z" fill="#c0504d" />
      <text x="1501" y="568" fontSize="12" className={lato}>85</text>
      <text x="1476" y="717" fontSize="12" textLength="35.5" className={lato}>Week1</text>
      <text x="1558" y="717" fontSize="12" textLength="35.5" className={lato}>Week2</text>
      <path d="M1572 738h20v6h-20z" fill="#4f81bd" />
    </svg>
  );
}

function Sheet() {
  const head = "h-[20px] border-r border-b border-[#8f8b85] bg-linear-to-b from-[#f6f6f5] from-50% to-[#f0efed] to-50% pl-[1px] text-center text-[14px] leading-[20px]";
  return (
    <div className="relative h-[553px] w-[1585px] overflow-hidden border-t border-[#b0aeaa] bg-white font-['Noto_Sans']">
      <div className="w-[1700px]">
        <div className="flex text-[#4c4c4c]">
          <div className="h-[20px] w-[41px] border-r border-b border-[#8f8b85] bg-[#f4f4f2]" />
          <div className={GRID}>
            <div className="h-[20px] border-r border-b border-[#d8663a] bg-linear-to-b from-[#f5a98b] from-50% to-[#ef7744] to-50% pl-[1px] text-center text-[14px] leading-[20px] font-bold text-white">A</div>
            <div className={head}>B</div>
            <div className={head}>C</div>
            {["D", "E", "F", "G"].map((l) => (
              <div key={l} className={`${head} flex justify-center`}><span>{l}</span></div>
            ))}
            {LETTERS.map((l) => (
              <div key={l} className={head}>{l}</div>
            ))}
          </div>
        </div>
        {ROWS.map((r) => (
          <Row key={r} r={r} />
        ))}
      </div>
      <div className="absolute top-[285px] left-[40px] h-[20px] w-[696px] border-2 border-black" />
      <div className="absolute top-[302px] left-[733px] h-[5px] w-[5px] bg-black" />
      <Charts />
    </div>
  );
}

function RightRail() {
  return (
    <div className="relative h-[553px] w-[15px]">
      <div className="h-[1px] w-[7px] bg-[#b0aeaa]" />
      <div className="flex h-[5px] w-[7px] items-center bg-[#aaa] pl-[1px]">
        <div className="h-[3px] w-[5px] bg-black" />
      </div>
      <div className="mt-[2px] h-[263px] w-[7px] bg-[#f1906a]" />
      <div className="absolute top-[-33px] left-[7px] h-[617px] w-[9px] border border-r-0 border-[#a9a6a2] bg-[#f6f5f4]" />
      <div className="absolute top-[238px] left-[7px] flex h-[74px] w-[7px] items-center rounded-[1px] bg-[#95918b]">
        <Ic w={6} h={8}>
          <path d="M5.5 0v8L0 4z" fill="#f2f1f0" />
        </Ic>
      </div>
    </div>
  );
}

function TabBar() {
  return (
    <div className="flex h-[25px] text-[12px] text-[#4c4c4c]">
      <div className="w-[155px]">
        <Ic w={155} h={25}>
          <path d="M14 4h1.500v16H14zM23.500 4v16l-8-8zM47 4v16l-8.500-8zM64 4v16l8-8zM88 4v16l8-8zM97 4h1.500v16H97z" fill="#b0aeab" />
          <path d="M124.2 4v16M116 12h17" stroke="#4a4a4a" strokeWidth="4" />
        </Ic>
      </div>
      <div className="w-[136px] pt-[3px]"><Fit w={110}>Defect Wise Report</Fit></div>
      <div className="w-[95px] pt-[3px]"><Fit w={82}>Weekly Report</Fit></div>
      <div className="h-[24px] w-[113px] border-b-[3px] border-[#948f88] bg-white pt-[3px] pl-[15px]">
        <Fit w={83}>GraphicalTrend</Fit>
      </div>
    </div>
  );
}

const Check = () => <div className="h-[14px] w-[14px] rounded-[3px] border border-[#a5a29e] bg-linear-to-b from-[#efefee] to-white" />;

function FindBar() {
  return (
    <div className="flex h-[39px] items-center pb-[2px] text-[14px] text-[#4c4c4c]">
      <Grip />
      <div className="w-[35px] pl-[6px]">
        <Ic w={22} h={22}>
          <circle cx="11" cy="11" r="10.5" fill="#d6363c" stroke="#9e2026" />
          <path d="M7 7l8 8M15 7l-8 8" stroke="#fff" strokeWidth="2.4" />
        </Ic>
      </div>
      <Combo box="w-[248px]" value="w-[220px] pl-[7px] text-[#8a8986]">
        <Fit w={29}>Find</Fit>
      </Combo>
      <div className="flex w-[69px] gap-[17px] pl-[9px]">
        <Ic w={16} h={16}>
          <path d="M8 0L0 8l2 2 4-2.500V16h4V7.500l4 2.500 2-2z" fill="#b5b3b0" />
        </Ic>
        <Ic w={16} h={16}>
          <path d="M8 16L0 8l2-2 4 2.500V0h4v8.500L14 6l2 2z" fill="#b5b3b0" />
        </Ic>
      </div>
      <div className="w-[52px] pl-[1px] text-[12px] text-[#8a8986]"><Fit w={40}>Find All</Fit></div>
      <Check />
      <div className="w-[139px] pl-[7px]"><Fit w={127}>Formatted Display</Fit></div>
      <Check />
      <div className="w-[92px] pl-[7px]"><Fit w={78}>Match Case</Fit></div>
      <div className="flex h-[34px] w-[42px] items-center border-x border-[#dcdad8] pl-[9px]"><FindRep /></div>
    </div>
  );
}

function StatusBar() {
  const cell = "flex h-[14px] items-center border-r border-white";
  return (
    <div className="flex h-[21px] items-center border-t border-[#a9a6a2] pt-[1px] text-[12px] text-[#4c4c4c]">
      <div className={`${cell} w-[220px] pl-[10px]`}><Fit w={67}>Sheet 3 of 3</Fit></div>
      <div className={`${cell} w-[217px]`} />
      <div className={`${cell} w-[329px] pl-[8px]`}><Fit w={144}>PageStyle_GraphicalTrend</Fit></div>
      <div className={`${cell} w-[235px] pl-[80px]`}><Fit w={76}>English (India)</Fit></div>
      <div className={`${cell} w-[68px]`} />
      <div className={`${cell} w-[29px] pl-[7px]`}>
        <Ic w={16} h={12}>
          <path d="M0 1.500h5M0 10.500h5M2.500 1.500v9M8.500 8.500v2h6v-2" fill="none" stroke="#8f8d8a" strokeWidth="1.2" />
        </Ic>
      </div>
      <div className={`${cell} w-[29px] pl-[8px]`}>
        <Ic w={13} h={11}>
          <path d="M.5.5h12v10H.5z" fill="#e6e5e4" stroke="#8f8d8a" />
          <path d="M5 2h3v3h2L6.5 9 3 5h2z" fill="#777" />
        </Ic>
      </div>
      <div className={`${cell} w-[29px]`} />
      <div className={`${cell} w-[253px] pl-[80px]`}><Fit w={94}>Average: ; Sum: 0</Fit></div>
      <div className={`${cell} w-[143px] pl-[9px]`}>
        <Ic w={130} h={14}>
          <path d="M0 7.500h9M117 7.500h9M121.500 3v9" stroke="#8f8d8a" strokeWidth="1.2" />
          <path d="M15 7h97" stroke="#96968a" strokeWidth="2.4" />
          <circle cx="63" cy="7.500" r="4.8" fill="#f3f2f1" stroke="#8f8d8a" />
        </Ic>
      </div>
      <div className="pl-[7px]"><Fit w={31}>100%</Fit></div>
    </div>
  );
}

/* ---------- dock ---------- */
function App48({ children, dots = 0, active = false }: { children: ReactNode; dots?: number; active?: boolean }) {
  return (
    <div className={`flex h-[62px] w-[62px] shrink-0 flex-col items-center rounded-[4px] pt-[7px] ${active ? "bg-[#67636b]" : ""}`}>
      <Ic w={48} h={48}>{children}</Ic>
      <div className="mt-[1px] flex gap-[3px]">
        {Array.from({ length: dots }, (_, i) => (
          <div key={i} className="h-[5.5px] w-[5.5px] rounded-full bg-[#e95420]" />
        ))}
      </div>
    </div>
  );
}

function Dock() {
  return (
    <div className="relative h-[65px] overflow-hidden bg-[#3a383e]">
      <svg width="1600" height="65" className="absolute inset-0">
        <defs>
          <filter id="soft" x="-50%" y="-50%" width="200%" height="200%">
            <feGaussianBlur stdDeviation="11" />
          </filter>
          <linearGradient id="orange" x2="0" y2="1">
            <stop offset="0" stopColor="#e8924f" />
            <stop offset=".7" stopColor="#ea6a30" />
            <stop offset="1" stopColor="#ee7f48" />
          </linearGradient>
          <linearGradient id="metal" x2="0" y2="1">
            <stop offset="0" stopColor="#d6d6d5" />
            <stop offset="1" stopColor="#8d8d8c" />
          </linearGradient>
          <linearGradient id="fire" x2="0" y2="1">
            <stop offset="0" stopColor="#ffd83d" />
            <stop offset=".5" stopColor="#ff7d1f" />
            <stop offset="1" stopColor="#ee1a6a" />
          </linearGradient>
          <linearGradient id="atom" x2="0" y2="1">
            <stop offset="0" stopColor="#a6d89b" />
            <stop offset="1" stopColor="#0ba06c" />
          </linearGradient>
          <linearGradient id="sky" x2="0" y2="1">
            <stop offset="0" stopColor="#00b4f2" />
            <stop offset="1" stopColor="#0078d6" />
          </linearGradient>
          <linearGradient id="zoom" x2="0" y2="1">
            <stop offset="0" stopColor="#4f9bff" />
            <stop offset="1" stopColor="#3d7df5" />
          </linearGradient>
          <linearGradient id="leaf" x2="0" y2="1">
            <stop offset="0" stopColor="#f2f2ee" />
            <stop offset=".45" stopColor="#dbe8b0" />
            <stop offset="1" stopColor="#3fb51c" />
          </linearGradient>
        </defs>
        <g filter="url(#soft)">
          <ellipse cx="20" cy="20" rx="60" ry="40" fill="#46384a" />
          <ellipse cx="220" cy="20" rx="80" ry="30" fill="#444548" />
          <ellipse cx="500" cy="40" rx="70" ry="30" fill="#43343e" />
          <ellipse cx="600" cy="40" rx="60" ry="40" fill="#46363f" />
          <ellipse cx="850" cy="30" rx="80" ry="30" fill="#424449" />
          <ellipse cx="1145" cy="5" rx="34" ry="26" fill="#4f3b42" />
          <ellipse cx="1238" cy="25" rx="15" ry="30" transform="rotate(10 1238 25)" fill="#6d3b49" />
          <ellipse cx="1320" cy="40" rx="65" ry="32" fill="#4c3943" />
          <ellipse cx="1415" cy="15" rx="28" ry="26" fill="#5e3d48" />
          <ellipse cx="1480" cy="30" rx="60" ry="36" fill="#493645" />
          <ellipse cx="1560" cy="5" rx="40" ry="24" fill="#563a44" />
        </g>
      </svg>
      <div className="relative flex gap-[4px] pt-[2px] pl-[2px]">
        <App48>
          <path d="M3 6.500l3 5h36l3-5v6.500H3z" fill="#b6451f" />
          <path d="M3 10h42v37H3z" fill="url(#orange)" />
          <path d="M3 5.500l4 .500v4H3zM45 5.500l-4 .500v4h4z" fill="#c64d23" />
          <path d="M17 14V5q0-3 3-3h8q3 0 3 3v9" fill="none" stroke="#d9582a" strokeWidth="3" />
          <path d="M16.500 39L24 21.500 31.500 39" fill="none" stroke="#fff" strokeWidth="4.5" />
          <path d="M14.500 33.500h19" stroke="#fff" strokeWidth="5" strokeLinecap="round" />
          <path d="M15 33.500h18" stroke="#ea6a30" strokeWidth="1" />
        </App48>
        <App48>
          <rect x="2" y="2" width="44" height="44" rx="3" fill="#fb4038" />
          <path d="M19 13.500l10.500 10.500L19 34.500 8 24z" fill="#fff" />
          <path d="M26 14.500l9.500 9.500-9.500 9.500" fill="none" stroke="#fff" strokeWidth="4" />
        </App48>
        <App48 dots={1}>
          <rect x="4" y="4" width="40" height="40" rx="3" fill="#747478" />
          <path d="M24 4h17a3 3 0 0 1 3 3v34a3 3 0 0 1-3 3H24z" fill="#ff7800" />
          <path d="M4 24h20" stroke="#4e4e52" />
          <path d="M10 14.500h8M10 32.500h8M14 28.500v8M30 31h8M30 35h8" stroke="#fff" strokeWidth="2" />
        </App48>
        <App48>
          <g fill="#0c8fd8">
            <circle cx="15.500" cy="15" r="12.500" />
            <circle cx="34" cy="34" r="12.500" />
          </g>
          <circle cx="24.500" cy="24" r="20.500" fill="url(#sky)" />
          <text x="24.500" y="35.500" textAnchor="middle" fontSize="33" className="font-['Open_Sans'] font-bold" fill="#fff">S</text>
        </App48>
        <App48>
          <rect x="1" y="1" width="46" height="46" rx="13" fill="url(#zoom)" />
          <path d="M10 16h14.500a5 5 0 0 1 5 5v11H15a5 5 0 0 1-5-5zM31 21.500l7-5.500v16l-7-5.500z" fill="#fff" />
        </App48>
        <App48>
          <circle cx="24" cy="24" r="20.500" fill="url(#atom)" stroke="#dff2e3" strokeWidth="1.500" />
          <g fill="none" stroke="#e7f7ea" strokeWidth="1.200">
            <ellipse cx="24" cy="24" rx="14" ry="5" transform="rotate(10 24 24)" />
            <ellipse cx="24" cy="24" rx="14" ry="5" transform="rotate(70 24 24)" />
            <ellipse cx="24" cy="24" rx="14" ry="5" transform="rotate(130 24 24)" />
          </g>
          <circle cx="24" cy="24" r="1.800" fill="#e7f7ea" />
        </App48>
        <App48>
          <circle cx="24" cy="24" r="21" fill="#fff" />
          <g transform="translate(10 10) scale(1.17)">
            <SlackMark c={["#36c5f0", "#2eb67d", "#ecb22e", "#e01e5a"]} />
          </g>
        </App48>
        <App48>
          <path d="M1 7h46v38H1z" fill="#dededd" />
          <path d="M3.500 10h41v32h-41z" fill="#8b8b8a" />
          <path d="M5 11h38v30H5z" fill="#2b2c2d" />
          <path d="M6 12h36v8L6 32z" fill="#4a4b4c" />
          <path d="M9 17l6 4.500L9 26" fill="none" stroke="#eee" strokeWidth="2.2" />
          <path d="M18 28.500h8" stroke="#eee" strokeWidth="2.2" />
        </App48>
        <App48>
          <path d="M35 2L3 31l5 4.500L37 12z" fill="#0a79c4" />
          <path d="M3 17l5-4.500 29 23-2 10.500z" fill="#0a8ad6" />
          <path d="M35 2l11 5v34l-11 5z" fill="#27a6f1" />
        </App48>
        <App48 dots={1}>
          <path d="M4.500 8h33l1.500 33.500H2z" fill="#f4f4f2" stroke="#bcbbb8" />
          <path d="M7 8h29" stroke="#666" strokeWidth="5.500" strokeDasharray="1.500 2" />
          <path d="M8 16h27M8 20h26M8 25h22M8 30h14M8 34h12" stroke="#b3b2af" strokeDasharray="5 1.5" />
          <path d="M21 33.500l1.500-6L41 7l4 3.500L27.500 31z" fill="#f09a3e" stroke="#bd6a1d" />
          <path d="M41 7l2-2.500q4 0 4 3.500l-2 2.500z" fill="#d7423c" />
          <path d="M21 33.500l.8-3 2.200 1.800z" fill="#333" />
        </App48>
        <App48 dots={1}>
          <path d="M5 1.500h38l2 18.500H3z" fill="#c9c9c8" />
          <path d="M6 10h36v11H6z" fill="#3a2415" />
          <path d="M9 11.500h30v2H9zM8 15h32v2.500H8zM7 19h34v2H7z" fill="#ee8a35" />
          <path d="M3 20.500h42V46H3z" fill="url(#metal)" />
          <rect x="17" y="28.500" width="14" height="11" rx="2" fill="#e5e5e4" />
          <path d="M20 31.500h8v5h-8z" fill="#fff" stroke="#333" strokeWidth="1.5" />
        </App48>
        <App48 dots={2} active>
          <ChromiumMark />
        </App48>
        <App48>
          <path d="M5 8c2 2 4 3 7 3C16 8 22 7 25 8c0-3 3-6 6-7 0 5 3 6 6 9l3-2c5 7 7 14 5 22-2 10-10 17-21 17C12 47 3 38 2 27 2 19 4 12 5 8z" fill="url(#fire)" />
          <path d="M31 1c0 5 3 6 6 9 5 6 5 14 2 20-2-9-8-14-14-22 0-3 3-6 6-7z" fill="#ffe14a" opacity=".85" />
          <circle cx="24" cy="25" r="10.500" fill="#6b3ad0" />
          <path d="M7 18c5-4 10-2 13 0 3 1 7 0 7 2s-6 3-7 6c-1 4 3 7 7 6-5 5-14 4-17-4z" fill="#ff8a1c" />
        </App48>
        <App48>
          <path d="M3 7l28-1 7 37-35 4z" fill="url(#leaf)" />
          <path d="M4 7h27" stroke="#888" strokeWidth="3" strokeDasharray="1.5 1.5" />
          <circle cx="12" cy="25" r="5" fill="#69b93c" stroke="#24500f" />
          <circle cx="18" cy="19.500" r="2.6" fill="#fff" stroke="#24500f" />
          <circle cx="13" cy="20" r="2.6" fill="#fff" stroke="#24500f" />
          <text x="12" y="37" fontSize="11" textLength="21" lengthAdjust="spacingAndGlyphs" fill="#22400f" className="font-['Liberation_Serif'] italic">Notepadqq</text>
          <path d="M33 30l1-5L44 1l2 1L37 26z" fill="#f0b429" stroke="#9c6a08" strokeWidth=".7" />
        </App48>
        <App48>
          <path d="M4 0h22l17 17v28q0 3-3 3H7q-3 0-3-3z" fill="#1583cc" />
          <path d="M7 3h17.500L40 21v24H7z" fill="#fff" />
          <path d="M31 0h9q3 0 3 3v9z" fill="#106eae" />
          <path d="M12 19.500h8M12 23.500h8M12 27.500h8M12 32h24M12 36h24M12 40.500h18" stroke="#1583cc" strokeWidth="2" />
          <path d="M22.500 19h13v10h-13z" fill="#fff" stroke="#1583cc" />
          <path d="M23 28.500l4-5 3 3 2.500-4 3 6z" fill="#1583cc" />
        </App48>
        <App48 dots={4}>
          <path d="M4 0h22l17 17v28q0 3-3 3H7q-3 0-3-3z" fill="#2fae1d" />
          <path d="M7 3h17.500L40 21v24H7z" fill="#fff" />
          <path d="M31 0h9q3 0 3 3v9z" fill="#1d8c10" />
          <path d="M12 20h21v20H12zM12 24h21M12 28h21M12 32h21M12 36h21M18 20v20M26 20v20" fill="none" stroke="#2fae1d" strokeWidth="1.3" />
          <path d="M25 31h10v10H25z" fill="#fff" stroke="#2fae1d" strokeWidth="1.3" />
          <path d="M27.500 40v-4M30 40v-7M32.500 40v-5" stroke="#2fae1d" strokeWidth="1.8" />
        </App48>
        <div className="ml-[493px] pt-[15px]">
          <Ic w={32} h={32}>
            {[4, 16, 28].map((y) => [4, 16, 28].map((x) => <circle key={`${x}-${y}`} cx={x} cy={y} r="3.1" fill="#f2f1f0" />))}
          </Ic>
        </div>
      </div>
    </div>
  );
}

export default function App() {
  return (
    <div className="h-[900px] w-[1600px] overflow-hidden bg-[#f2f1f0] font-['Noto_Sans',sans-serif]">
      <TopPanel />
      <TitleAndMenu />
      <StandardBar />
      <FormatBar />
      <FormulaBar />
      <div className="flex">
        <Sheet />
        <RightRail />
      </div>
      <div className="flex h-[7px]">
        <div className="ml-[1px] h-[7px] w-[745px] bg-[#f1906a]" />
        <div className="ml-[834px] h-[7px] w-[5px] border border-[#aaa] bg-black" />
      </div>
      <TabBar />
      <FindBar />
      <StatusBar />
      <Dock />
    </div>
  );
}
